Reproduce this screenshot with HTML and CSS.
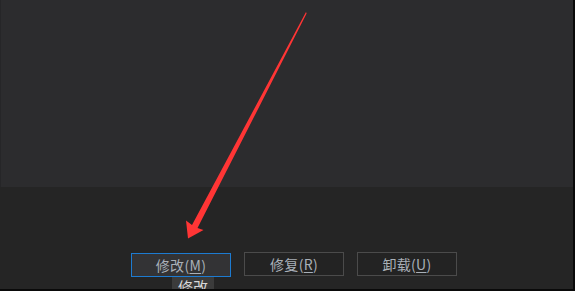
FILE: index.html
```html
<!DOCTYPE html>
<html lang="zh-CN">
<head>
    <meta charset="UTF-8">
    <title>修改</title>
    <link rel="stylesheet" href="styles.css">
</head>
<body>
    <div class="window">
        <div class="content"></div>
        <div class="footer">
            <div class="btn-wrap">
                <button class="btn active">修改(<u>M</u>)</button>
                <span class="tooltip">修改</span>
            </div>
            <button class="btn">修复(<u>R</u>)</button>
            <button class="btn">卸载(<u>U</u>)</button>
        </div>

        <!-- 红色箭头标注 -->
        <svg class="arrow" width="575" height="291" viewBox="0 0 575 291">
            <polygon fill="#ff3535" points="306,12 306.6,13.5 197.5,228 203.5,230 188,238.5 186,220.5 192,225"/>
        </svg>
    </div>
</body>
</html>
```

FILE: styles.css
```css
body {
    margin: 0;
    background-color: #0a0a0a;
    font-family: "Noto Sans CJK SC", "Noto Sans", sans-serif;
}
.window {
    position: relative;
    width: 573px;
    height: 289px;
    background-color: #252525;
    display: flex;
    flex-direction: column;
    overflow: hidden;
}
.content {
    height: 187px;
    background-color: #2c2c2e;
    border-left: 1px solid #262628;
}
.footer {
    display: flex;
    gap: 13px;
    padding: 65px 0 0 131px;
}
.btn-wrap {
    position: relative;
}
.btn {
    width: 100px;
    height: 24px;
    padding: 0;
    background-color: #232323;
    border: 1px solid #4b4b4b;
    color: #a9b0b8;
    font-family: inherit;
    font-size: 14px;
    letter-spacing: 0.3px;
    line-height: 20px;
    cursor: pointer;
}
.btn u {
    text-underline-offset: 2px;
}
.btn.active {
    background-color: #333335;
    border-color: #1d7bd1;
}
.tooltip {
    position: absolute;
    left: 41px;
    top: 25px;
    width: 42px;
    height: 20px;
    background-color: #3b3b3b;
    color: #d8d8d8;
    font-size: 15px;
    line-height: 19px;
    text-align: center;
}
.arrow {
    position: absolute;
    left: 0;
    top: 0;
    pointer-events: none;
}
```
